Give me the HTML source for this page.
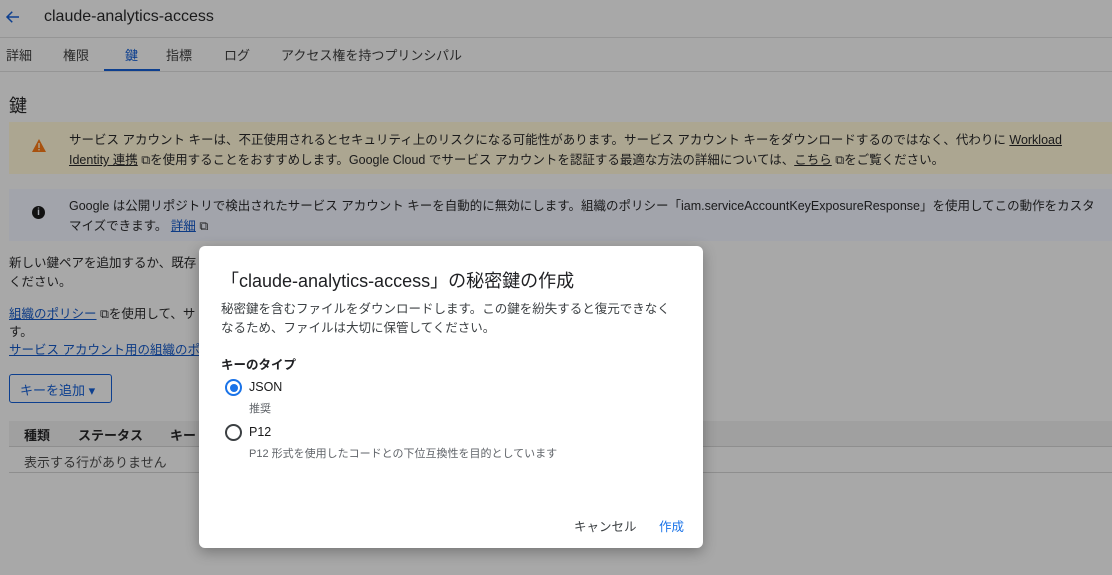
<!DOCTYPE html>
<html><head><meta charset="utf-8"><style>
*{margin:0;padding:0;box-sizing:border-box}
body{width:1112px;height:575px;overflow:hidden;background:#a8a8a8;font-family:"Liberation Sans","Noto Sans CJK JP",sans-serif;color:#1a1a1b;position:relative;font-size:13px}
.a{position:absolute;white-space:nowrap}
.lk{color:#0d3b85;text-decoration:underline}
</style></head><body>
<svg class="a" style="left:4px;top:8px" width="18" height="18" viewBox="0 0 24 24"><path d="M20 12H5M11 5l-7 7 7 7" stroke="#0d3f8f" stroke-width="2" fill="none"/></svg>
<div class="a" style="left:44px;top:8px;font-size:16px">claude-analytics-access</div>
<div class="a" style="left:0;top:37px;width:1112px;height:1px;background:#959595"></div>
<div class="a" style="left:6px;top:45px;font-size:13px;color:#2a2a2a">詳細</div>
<div class="a" style="left:63px;top:45px;color:#2a2a2a">権限</div>
<div class="a" style="left:125px;top:45px;color:#0d3f8f">鍵</div>
<div class="a" style="left:104px;top:69px;width:56px;height:2px;background:#0d3f8f"></div>
<div class="a" style="left:166px;top:45px;color:#2a2a2a">指標</div>
<div class="a" style="left:224px;top:45px;color:#2a2a2a">ログ</div>
<div class="a" style="left:281px;top:45px;color:#2a2a2a">アクセス権を持つプリンシパル</div>
<div class="a" style="left:0;top:71px;width:1112px;height:1px;background:#959595"></div>
<div class="a" style="left:9px;top:92px;font-size:18px">鍵</div>
<div class="a" style="left:9px;top:122px;width:1103px;height:52px;background:#aca691"></div>
<svg class="a" style="left:32px;top:139px" width="14" height="13" viewBox="0 0 14 13"><path d="M7 0L14 13H0z" fill="#a8520f"/><rect x="6.3" y="4" width="1.4" height="5" fill="#aca691"/><rect x="6.3" y="10" width="1.4" height="1.4" fill="#aca691"/></svg>
<div class="a" style="left:69px;top:130px;line-height:20px;font-size:12.5px">サービス アカウント キーは、不正使用されるとセキュリティ上のリスクになる可能性があります。サービス アカウント キーをダウンロードするのではなく、代わりに <span style="text-decoration:underline">Workload</span><br><span style="text-decoration:underline">Identity 連携</span> ⧉を使用することをおすすめします。Google Cloud でサービス アカウントを認証する最適な方法の詳細については、<span style="text-decoration:underline">こちら</span> ⧉をご覧ください。</div>
<div class="a" style="left:9px;top:189px;width:1103px;height:52px;background:#a2a4ab"></div>
<div class="a" style="left:32px;top:206px;width:13px;height:13px;border-radius:50%;background:#111;color:#a2a4ab;font-size:10px;font-weight:bold;text-align:center;line-height:13px">i</div>
<div class="a" style="left:69px;top:196px;line-height:20px;font-size:12.5px">Google は公開リポジトリで検出されたサービス アカウント キーを自動的に無効にします。組織のポリシー「iam.serviceAccountKeyExposureResponse」を使用してこの動作をカスタ<br>マイズできます。 <span class="lk">詳細</span> ⧉</div>
<div class="a" style="left:9px;top:254px;line-height:19px;font-size:12.5px">新しい鍵ペアを追加するか、既存<br>ください。</div>
<div class="a" style="left:9px;top:305px;line-height:18px;font-size:12.5px"><span class="lk">組織のポリシー</span> ⧉を使用して、サ<br>す。<br><span class="lk">サービス アカウント用の組織のポ</span></div>
<div class="a" style="left:9px;top:374px;width:103px;height:29px;border:1px solid #0d3f8f;border-radius:3px;color:#0d3f8f;padding:5px 0 0 10px;font-size:13px">キーを追加 ▾</div>
<div class="a" style="left:9px;top:421px;width:1103px;height:25px;background:#a0a0a0"></div>
<div class="a" style="left:24px;top:425px;font-weight:bold">種類</div>
<div class="a" style="left:78px;top:425px;font-weight:bold">ステータス</div>
<div class="a" style="left:170px;top:425px;font-weight:bold">キー</div>
<div class="a" style="left:9px;top:446px;width:1103px;height:1px;background:#8e8e8e"></div>
<div class="a" style="left:24px;top:452px;color:#333">表示する行がありません</div>
<div class="a" style="left:9px;top:472px;width:1103px;height:1px;background:#8e8e8e"></div>

<div class="a" style="left:199px;top:246px;width:504px;height:302px;background:#fff;border-radius:6px;box-shadow:0 4px 14px rgba(0,0,0,.3)">
<div class="a" style="left:22px;top:21px;font-size:18px;color:#202124">「claude-analytics-access」の秘密鍵の作成</div>
<div class="a" style="left:22px;top:54px;line-height:19px;font-size:12.5px;color:#3c4043">秘密鍵を含むファイルをダウンロードします。この鍵を紛失すると復元できなく<br>なるため、ファイルは大切に保管してください。</div>
<div class="a" style="left:22px;top:108px;font-weight:bold;font-size:12.5px;color:#202124">キーのタイプ</div>
<div class="a" style="left:26px;top:133px;width:17px;height:17px;border:2px solid #1a73e8;border-radius:50%"><div style="margin:2.5px;width:8px;height:8px;border-radius:50%;background:#1a73e8"></div></div>
<div class="a" style="left:50px;top:134px;font-size:12.5px">JSON</div>
<div class="a" style="left:50px;top:154px;font-size:11px;color:#5f6368">推奨</div>
<div class="a" style="left:26px;top:178px;width:17px;height:17px;border:2px solid #3c4043;border-radius:50%"></div>
<div class="a" style="left:50px;top:179px;font-size:12.5px">P12</div>
<div class="a" style="left:50px;top:199px;font-size:11px;color:#5f6368">P12 形式を使用したコードとの下位互換性を目的としています</div>
<div class="a" style="left:375px;top:270px;font-size:12.5px;color:#3c4043">キャンセル</div>
<div class="a" style="left:460px;top:270px;font-size:12.5px;color:#1a73e8">作成</div>
</div>
</body></html>
